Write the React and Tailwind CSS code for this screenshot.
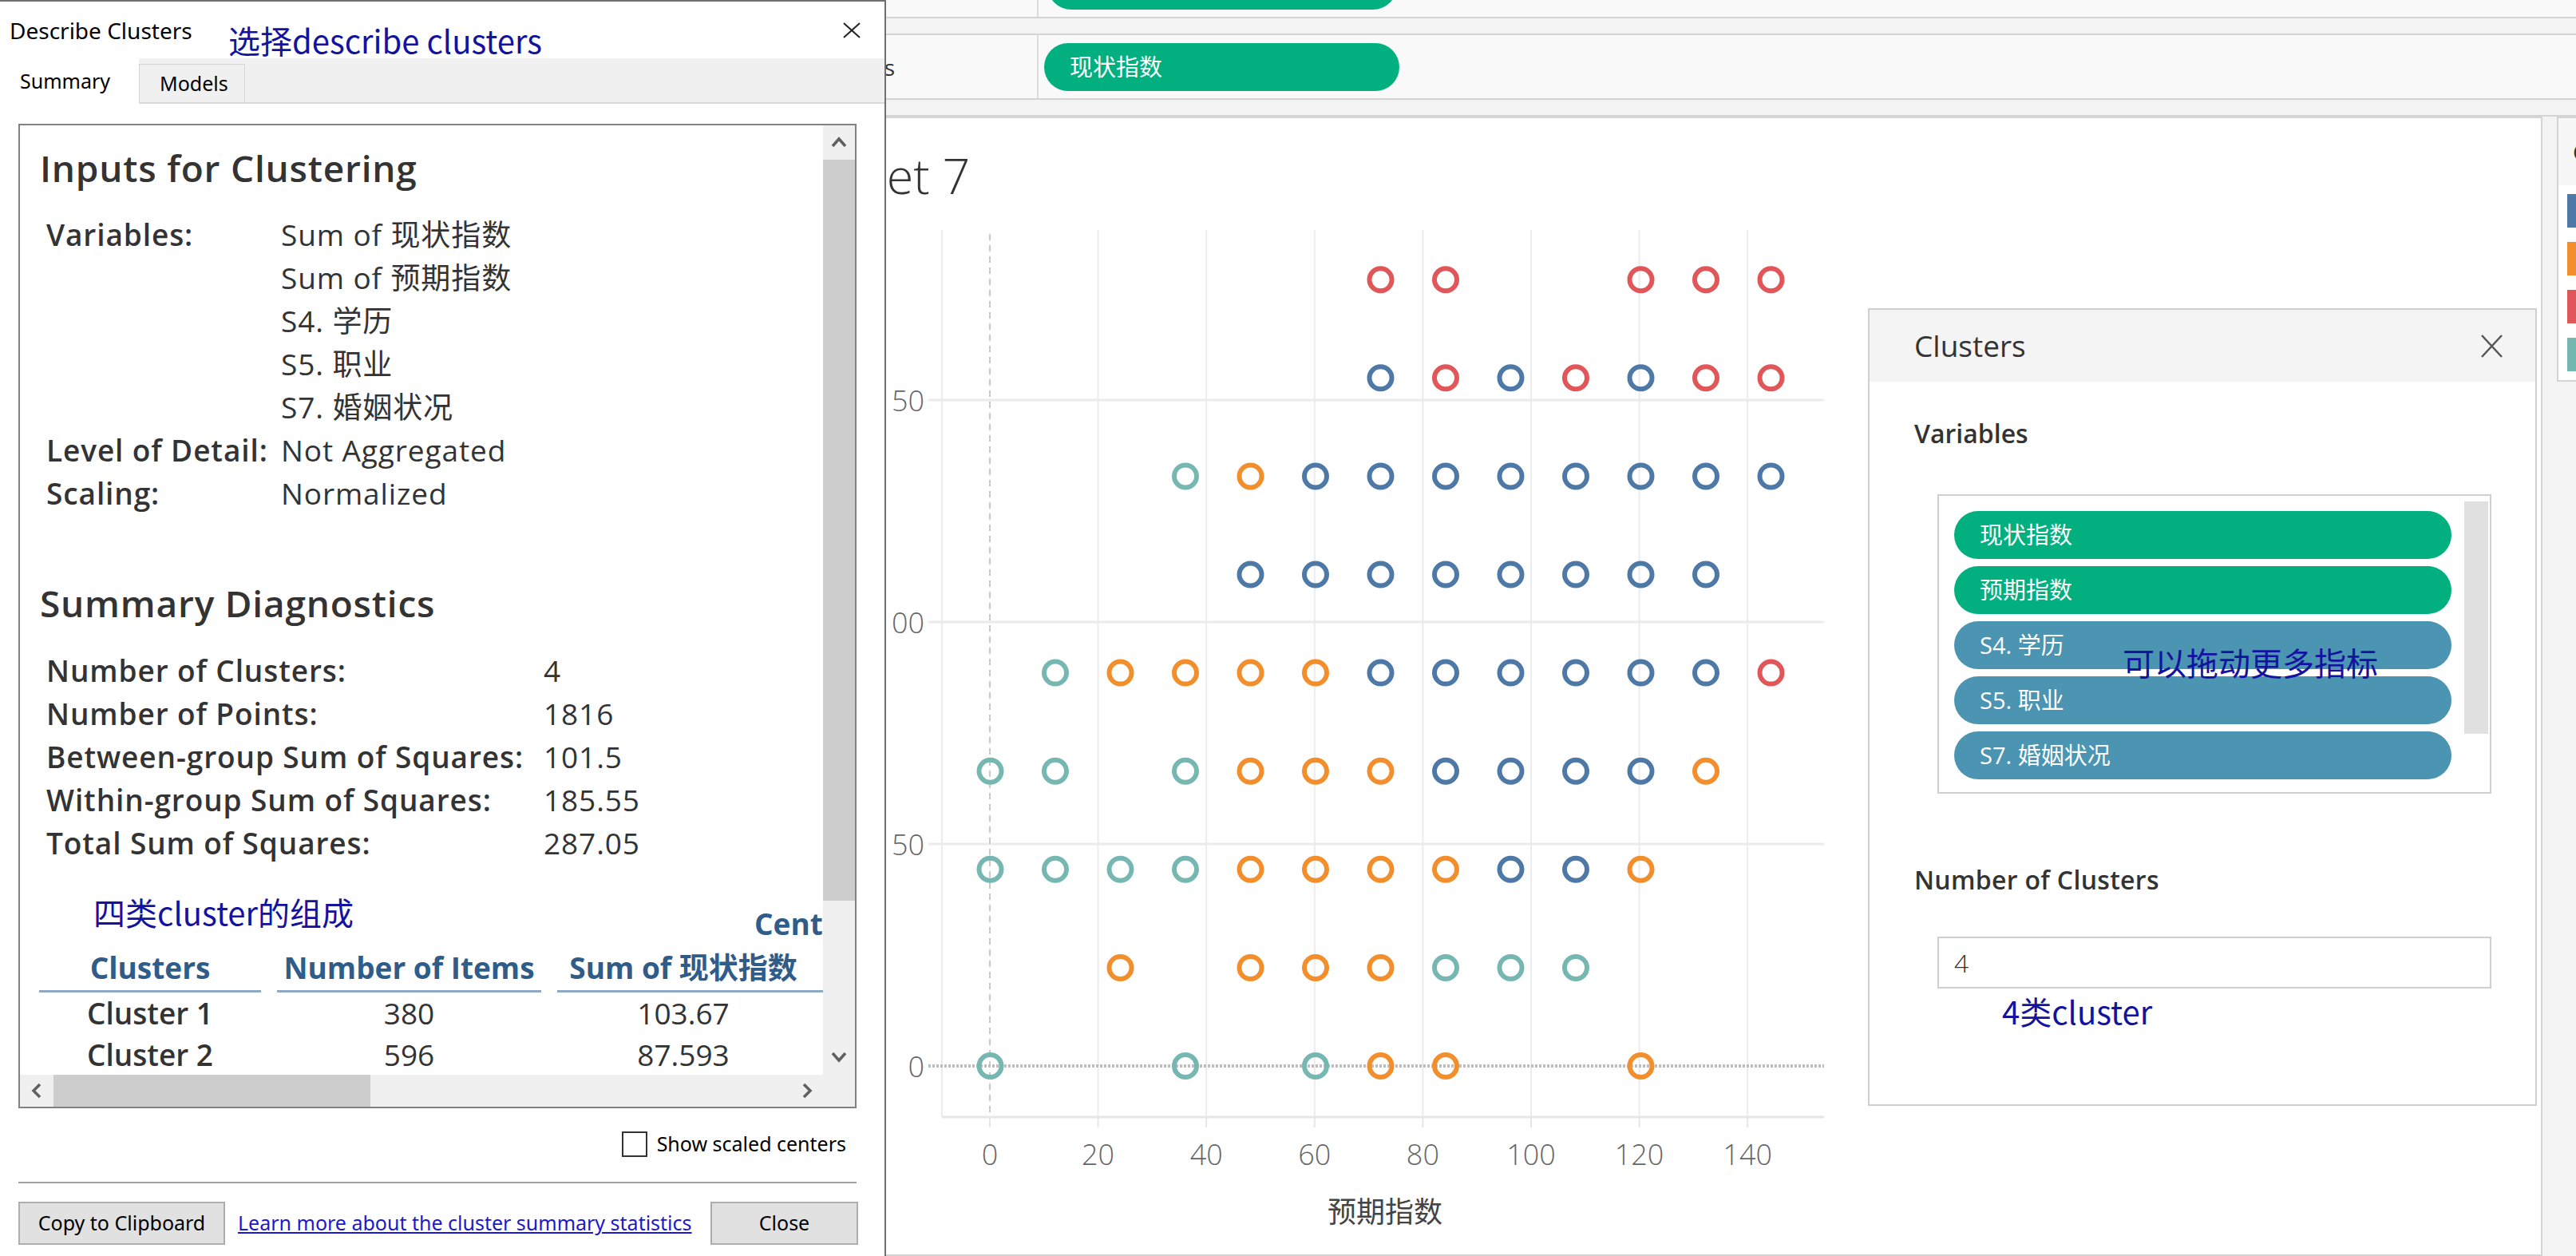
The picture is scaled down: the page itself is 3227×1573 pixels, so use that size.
import React from "react";

// Tableau workspace with the "Describe Clusters" dialog and the Clusters card open

const COLORS = { b: "#4e79a7", o: "#f28e2b", r: "#e15759", t: "#76b7b2" };

// one string per row of marks, top row first; each char is one x step of 12
const MARK_ROWS = [
  "......rr..rrr",
  "......brbrbrr",
  "...tobbbbbbbb",
  "....bbbbbbbb.",
  ".toooobbbbbbr",
  "tt.tooobbbbo.",
  "ttttoooobbo..",
  "..o.ooottt...",
  "t..t.too..o..",
];

const xs = (v) => 1240 + 6.78 * v;
const ys = (v) => 1335 - 5.56 * v;

function CloseX({ w, h, stroke, width }) {
  return (
    <svg width={w} height={h} viewBox={`0 0 ${w} ${h}`} fill="none" stroke={stroke} strokeWidth={width}>
      <line x1="1" y1="1" x2={w - 1} y2={h - 1} />
      <line x1={w - 1} y1="1" x2="1" y2={h - 1} />
    </svg>
  );
}

function Chevron({ dir }) {
  const pts = {
    up: "2 12 10 3 18 12",
    down: "2 3 10 12 18 3",
    left: "12 2 4 10 12 18",
    right: "4 2 12 10 4 18",
  }[dir];
  const vertical = dir === "up" || dir === "down";
  return (
    <svg width={vertical ? 20 : 16} height={vertical ? 15 : 20} viewBox={vertical ? "0 0 20 15" : "0 0 16 20"} fill="none" stroke="#606060" strokeWidth="3.5">
      <polyline points={pts} />
    </svg>
  );
}

function Chart() {
  const ticks = [0, 20, 40, 60, 80, 100, 120, 140];
  return (
    <svg width="1300" height="1300" viewBox="1090 270 1300 1300" className="block ml-[1076px]">
      {/* vertical grid */}
      <line x1="1180" y1="288" x2="1180" y2="1399" stroke="#ececec" strokeWidth="2" />
      {ticks.slice(1).map((v) => (
        <line key={v} x1={xs(v)} y1="288" x2={xs(v)} y2="1399" stroke="#ececec" strokeWidth="2" />
      ))}
      {/* horizontal grid */}
      {[50, 100, 150].map((v) => (
        <line key={v} x1="1163" y1={ys(v)} x2="2285" y2={ys(v)} stroke="#ebebeb" strokeWidth="3" />
      ))}
      <line x1="1180" y1="1399" x2="2285" y2="1399" stroke="#e6e6e6" strokeWidth="3" />
      {ticks.map((v) => (
        <line key={v} x1={xs(v)} y1="1400" x2={xs(v)} y2="1412" stroke="#e6e6e6" strokeWidth="2" />
      ))}
      {/* zero lines */}
      <line x1="1240" y1="293" x2="1240" y2="1399" stroke="#c9c9c9" strokeWidth="2" strokeDasharray="8 6" />
      <line x1="1163" y1="1335" x2="2285" y2="1335" stroke="#bdbdbd" strokeWidth="4" strokeDasharray="3 2" />
      {/* axis labels */}
      <g fontFamily="'Open Sans', sans-serif" fontWeight="300" fontSize="36" fill="#666">
        {[150, 100, 50, 0].map((v) => (
          <text key={v} x="1158" y={ys(v)} textAnchor="end" dominantBaseline="central">{v}</text>
        ))}
        {ticks.map((v) => (
          <text key={v} x={xs(v)} y="1445" textAnchor="middle" dominantBaseline="central">{v}</text>
        ))}
      </g>
      <text x="1735" y="1517" textAnchor="middle" dominantBaseline="central" fontFamily="'Open Sans', 'Noto Sans CJK SC', sans-serif" fontSize="36" fill="#444">预期指数</text>
      {/* marks */}
      {MARK_ROWS.map((row, i) => {
        const k = 8 - i;
        return row.split("").map((c, j) =>
          c === "." ? null : (
            <circle key={`${k}-${j}`} cx={1240.5 + 81.5 * j} cy={1335 - 123.1 * k} r="14" fill="none" stroke={COLORS[c]} strokeWidth="6" />
          )
        );
      })}
    </svg>
  );
}

function Legend() {
  return (
    <div className="ml-[18px] w-[60px] h-[332px] shrink-0 bg-white border-2 border-[#d4d4d4] overflow-hidden">
      <div className="h-[84px] bg-[#f7f7f7] flex items-center pl-[18px] text-[28px] whitespace-nowrap text-[#333]">Clusters</div>
      <div className="flex flex-col gap-[18px] pl-[11px] pt-[11px]">
        <div className="w-[40px] h-[42px] bg-[#4e79a7]" />
        <div className="w-[40px] h-[42px] bg-[#f28e2b]" />
        <div className="w-[40px] h-[42px] bg-[#e15759]" />
        <div className="w-[40px] h-[42px] bg-[#76b7b2]" />
      </div>
    </div>
  );
}

function Workspace() {
  return (
    <div className="flex flex-col h-full">
      {/* Columns shelf */}
      <div className="flex h-[23px] shrink-0 bg-[#f9f9f9] border-b-2 border-[#d4d4d4] overflow-hidden">
        <div className="w-[1301px] shrink-0 border-r-2 border-[#dcdcdc]" />
        <div className="flex items-end h-full pl-[11px] pb-[9px]">
          <div className="w-[438px] h-[60px] shrink-0 rounded-full bg-[#02b07f]" />
        </div>
      </div>
      <div className="h-[21px] shrink-0 bg-[#f3f3f3] border-b-2 border-[#d4d4d4]" />
      {/* Rows shelf */}
      <div className="flex h-[81px] shrink-0 bg-[#f9f9f9] border-b-2 border-[#d4d4d4]">
        <div className="w-[1301px] shrink-0 border-r-2 border-[#dcdcdc] flex items-center pl-[1052px] text-[28px] text-[#333]">Rows</div>
        <div className="flex items-center pl-[7px]">
          <div className="w-[445px] h-[60px] rounded-full bg-[#02b07f] flex items-center pl-[32px] text-[29px] text-white">现状指数</div>
        </div>
      </div>
      <div className="h-[21px] shrink-0 bg-[#f3f3f3] border-b-2 border-[#d4d4d4]" />
      <div className="flex flex-1 min-h-0">
        <div className="ml-[12px] w-[3173px] shrink-0 bg-white border-2 border-[#d4d4d4] overflow-hidden">
          <div className="h-[122px] pt-[41px] pl-[994px] text-[61px] font-light leading-none text-[#333]">Sheet 7</div>
          <Chart />
        </div>
        <Legend />
      </div>
    </div>
  );
}

const INPUTS = [
  ["Variables:", "Sum of 现状指数"],
  ["", "Sum of 预期指数"],
  ["", "S4. 学历"],
  ["", "S5. 职业"],
  ["", "S7. 婚姻状况"],
  ["Level of Detail:", "Not Aggregated"],
  ["Scaling:", "Normalized"],
];

const STATS = [
  ["Number of Clusters:", "4"],
  ["Number of Points:", "1816"],
  ["Between-group Sum of Squares:", "101.5"],
  ["Within-group Sum of Squares:", "185.55"],
  ["Total Sum of Squares:", "287.05"],
];

const CLUSTERS = [
  ["Cluster 1", "380", "103.67"],
  ["Cluster 2", "596", "87.593"],
];

function DescribeDialog() {
  return (
    <div className="absolute left-0 top-0 w-[1110px] h-[1573px] bg-white border-t-2 border-r-2 border-[#6f6f6f] flex flex-col font-['Noto_Sans','Noto_Sans_CJK_SC',sans-serif] text-black">
      <div className="h-[71px] shrink-0 flex items-center justify-between pl-[12px] pr-[30px]">
        <span className="text-[28px]">Describe Clusters</span>
        <CloseX w={22} h={20} stroke="#222" width={2} />
      </div>
      <div className="h-[57px] shrink-0 flex bg-[#f0f0f0] border-b-2 border-[#dadada]">
        <div className="w-[174px] h-[57px] shrink-0 bg-white flex items-center pl-[25px] text-[25px]">Summary</div>
        <div className="w-[133px] h-[48px] mt-[7px] border-x border-t border-[#d6d6d6] flex items-center pl-[25px] text-[25px]">Models</div>
      </div>

      {/* summary box */}
      <div className="mt-[25px] ml-[23px] w-[1050px] h-[1233px] shrink-0 border-2 border-[#828282] flex flex-col font-['Open_Sans','Noto_Sans_CJK_SC',sans-serif] text-[#333]">
        <div className="flex h-[1189px]">
          <div className="flex-1 min-w-0 overflow-hidden pl-[25px] pt-[23px]">
            <h2 className="text-[46px] tracking-[0.8px] font-semibold leading-[60px] whitespace-nowrap">Inputs for Clustering</h2>
            <div className="mt-[27px] pl-[8px]">
              {INPUTS.map(([label, value], i) => (
                <div key={i} className="flex h-[54px] items-center text-[37px] tracking-[0.9px] whitespace-nowrap">
                  <div className="w-[294px] shrink-0 font-semibold">{label}</div>
                  <div>{value}</div>
                </div>
              ))}
            </div>
            <h2 className="mt-[80px] text-[46px] tracking-[0.8px] font-semibold leading-[60px] whitespace-nowrap">Summary Diagnostics</h2>
            <div className="mt-[28px] pl-[8px]">
              {STATS.map(([label, value]) => (
                <div key={label} className="flex h-[54px] items-center text-[37px] tracking-[0.9px] whitespace-nowrap">
                  <div className="w-[623px] shrink-0 font-semibold">{label}</div>
                  <div>{value}</div>
                </div>
              ))}
            </div>
            <div className="mt-[47px] h-[54px] flex items-center pl-[895px] text-[37px] font-bold text-[#2f5c88] whitespace-nowrap">Centers</div>
            <div className="flex gap-[20px] -ml-[1px] text-[37px] whitespace-nowrap">
              <div className="w-[278px] shrink-0 h-[59px] border-b-[3px] border-[#8fa8c4] flex items-center justify-center font-bold text-[#2f5c88]">Clusters</div>
              <div className="w-[331px] shrink-0 h-[59px] border-b-[3px] border-[#8fa8c4] flex items-center justify-center font-bold text-[#2f5c88]">Number of Items</div>
              <div className="w-[360px] shrink-0 h-[59px] border-b-[3px] border-[#8fa8c4] flex items-center justify-center pr-[44px] font-bold text-[#2f5c88]">Sum of 现状指数</div>
            </div>
            {CLUSTERS.map(([name, items, sum]) => (
              <div key={name} className="flex gap-[20px] -ml-[1px] h-[52px] items-center text-[37px] leading-[44px] whitespace-nowrap">
                <div className="w-[278px] shrink-0 text-center font-semibold">{name}</div>
                <div className="w-[331px] shrink-0 text-center">{items}</div>
                <div className="w-[360px] shrink-0 text-center pr-[44px]">{sum}</div>
              </div>
            ))}
          </div>
          {/* vertical scrollbar */}
          <div className="w-[40px] shrink-0 flex flex-col bg-[#f0f0f0]">
            <div className="h-[43px] flex items-center justify-center"><Chevron dir="up" /></div>
            <div className="h-[928px] bg-[#cdcdcd]" />
            <div className="flex-1" />
            <div className="h-[46px] flex items-center justify-center"><Chevron dir="down" /></div>
          </div>
        </div>
        {/* horizontal scrollbar */}
        <div className="h-[40px] flex bg-[#f0f0f0]">
          <div className="w-[42px] flex items-center justify-center"><Chevron dir="left" /></div>
          <div className="w-[397px] bg-[#cdcdcd]" />
          <div className="flex-1" />
          <div className="w-[40px] flex items-center justify-center"><Chevron dir="right" /></div>
          <div className="w-[40px]" />
        </div>
      </div>

      <div className="mt-[29px] h-[32px] shrink-0 flex items-center justify-end pr-[48px] gap-[12px]">
        <div className="w-[32px] h-[32px] border-2 border-[#333] bg-white" />
        <span className="text-[25px]">Show scaled centers</span>
      </div>
      <div className="mt-[31px] ml-[23px] w-[1050px] h-[2px] shrink-0 bg-[#a0a0a0]" />
      <div className="mt-[23px] ml-[23px] w-[1052px] h-[54px] shrink-0 flex items-center text-[25px]">
        <div className="w-[259px] h-full flex items-center justify-center bg-[#e1e1e1] border-2 border-[#adadad]">Copy to Clipboard</div>
        <span className="ml-[16px] text-[#1a1acc] underline">Learn more about the cluster summary statistics</span>
        <div className="ml-auto w-[185px] h-full flex items-center justify-center bg-[#e1e1e1] border-2 border-[#adadad]">Close</div>
      </div>
    </div>
  );
}

function ClustersCard() {
  const pills = [
    ["现状指数", "bg-[#02b07f]"],
    ["预期指数", "bg-[#02b07f]"],
    ["S4. 学历", "bg-[#4b94b2]"],
    ["S5. 职业", "bg-[#4b94b2]"],
    ["S7. 婚姻状况", "bg-[#4b94b2]"],
  ];
  return (
    <div className="absolute left-[2340px] top-[386px] w-[838px] h-[999px] bg-white border-2 border-[#cfcfcf] flex flex-col text-[#333]">
      <div className="h-[90px] shrink-0 bg-[#f4f4f4] flex items-center justify-between pl-[56px] pr-[41px]">
        <span className="text-[37px]">Clusters</span>
        <CloseX w={27} h={29} stroke="#555" width={2.5} />
      </div>
      <div className="mt-[45px] pl-[56px] h-[40px] flex items-center text-[32px] font-semibold">Variables</div>
      <div className="mt-[56px] ml-[85px] w-[694px] h-[375px] shrink-0 border-2 border-[#cfcfcf] flex">
        <div className="flex-1 flex flex-col gap-[9px] pl-[19px] pt-[19px]">
          {pills.map(([label, bg]) => (
            <div key={label} className={`w-[623px] h-[60px] shrink-0 rounded-full ${bg} flex items-center pl-[32px] text-[29px] text-white`}>{label}</div>
          ))}
        </div>
        <div className="w-[30px] h-[291px] mt-[7px] mr-[2px] bg-[#e0e0e0]" />
      </div>
      <div className="mt-[88px] pl-[56px] h-[40px] flex items-center text-[32px] font-semibold tracking-[0.3px]">Number of Clusters</div>
      <div className="mt-[51px] ml-[85px] w-[694px] h-[65px] shrink-0 border-2 border-[#cfcfcf] flex items-center pl-[19px] text-[32px] font-light">4</div>
    </div>
  );
}

function Notes() {
  const note = "absolute whitespace-nowrap text-[40px] leading-[40px] text-[#13139f] font-['Noto_Sans_CJK_SC',sans-serif]";
  return (
    <>
      <div className={`${note} left-[286px] top-[30px]`}>选择describe clusters</div>
      <div className={`${note} left-[117px] top-[1122px]`}>四类cluster的组成</div>
      <div className={`${note} left-[2659px] top-[809px]`}>可以拖动更多指标</div>
      <div className={`${note} left-[2508px] top-[1246px]`}>4类cluster</div>
    </>
  );
}

export default function App() {
  return (
    <div className="relative w-[3227px] h-[1573px] overflow-hidden bg-[#f3f3f3] font-['Open_Sans','Noto_Sans_CJK_SC',sans-serif] text-[#333]">
      <Workspace />
      <DescribeDialog />
      <ClustersCard />
      <Notes />
    </div>
  );
}
